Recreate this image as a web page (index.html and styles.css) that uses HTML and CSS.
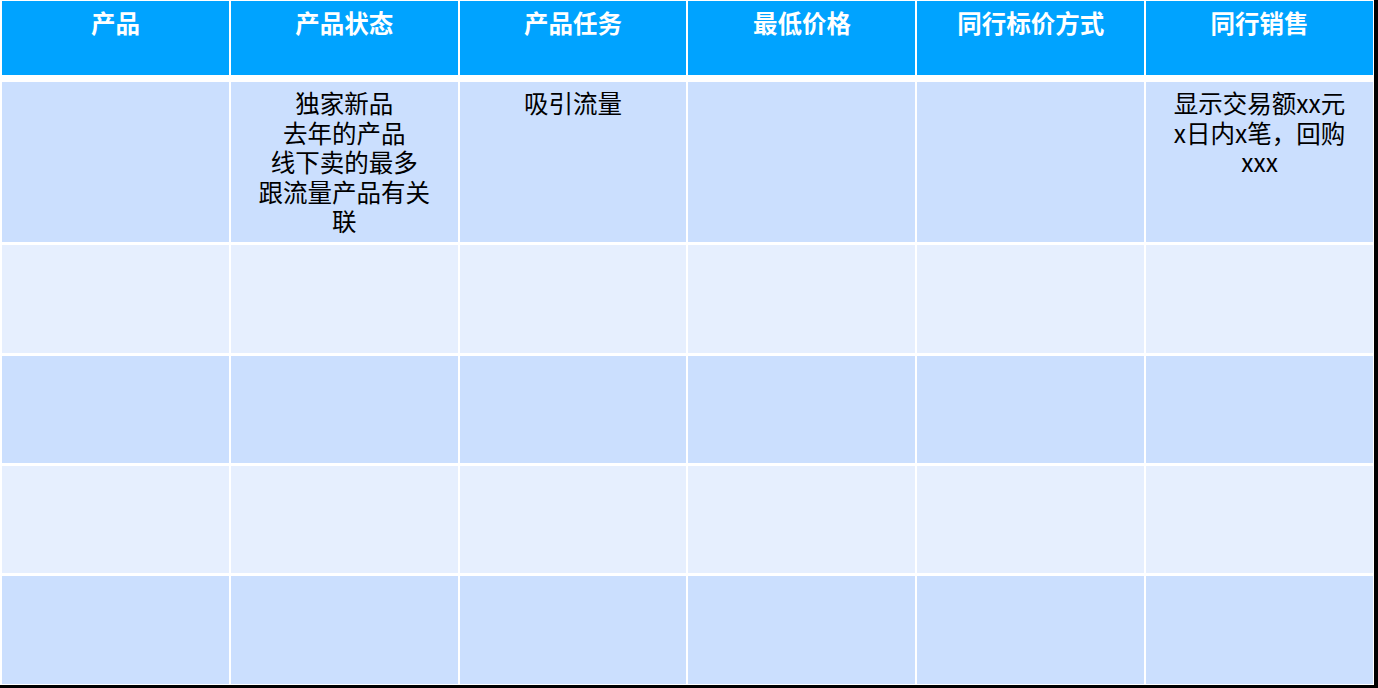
FILE: index.html
```html
<!DOCTYPE html>
<html lang="zh-CN">
<head>
<meta charset="utf-8">
<title>产品表</title>
<link rel="stylesheet" href="styles.css">
</head>
<body>
<div class="sheet">
  <div class="head-row">
    <div class="hcell">产品</div>
    <div class="hcell">产品状态</div>
    <div class="hcell">产品任务</div>
    <div class="hcell">最低价格</div>
    <div class="hcell">同行标价方式</div>
    <div class="hcell">同行销售</div>
  </div>
  <div class="body">
    <div class="row row-tall dark">
      <div class="cell"></div>
      <div class="cell">
        <div class="line">独家新品</div>
        <div class="line">去年的产品</div>
        <div class="line">线下卖的最多</div>
        <div class="line">跟流量产品有关</div>
        <div class="line">联</div>
      </div>
      <div class="cell"><div class="line">吸引流量</div></div>
      <div class="cell"></div>
      <div class="cell"></div>
      <div class="cell">
        <div class="line">显示交易额xx元</div>
        <div class="line">x日内x笔，回购</div>
        <div class="line">xxx</div>
      </div>
    </div>
    <div class="row r108 light">
      <div class="cell"></div><div class="cell"></div><div class="cell"></div><div class="cell"></div><div class="cell"></div><div class="cell"></div>
    </div>
    <div class="row r107 dark">
      <div class="cell"></div><div class="cell"></div><div class="cell"></div><div class="cell"></div><div class="cell"></div><div class="cell"></div>
    </div>
    <div class="row r107 light">
      <div class="cell"></div><div class="cell"></div><div class="cell"></div><div class="cell"></div><div class="cell"></div><div class="cell"></div>
    </div>
    <div class="row r108 dark">
      <div class="cell"></div><div class="cell"></div><div class="cell"></div><div class="cell"></div><div class="cell"></div><div class="cell"></div>
    </div>
  </div>
</div>
</body>
</html>
```
FILE: styles.css
```css
html, body {
  margin: 0;
  padding: 0;
  background: #000;
  width: 1378px;
  height: 688px;
  overflow: hidden;
}
.sheet {
  box-sizing: border-box;
  width: 1374px;
  height: 685px;
  background: #fff;
  padding: 1px 1px 1px 2px;
  display: flex;
  flex-direction: column;
  font-family: "Noto Sans CJK SC", "Noto Sans", sans-serif;
}
.head-row, .row {
  display: grid;
  grid-template-columns: repeat(6, 1fr);
  column-gap: 2px;
}
.head-row {
  height: 74px;
  margin-bottom: 7px;
}
.hcell {
  background: #00a3ff;
  color: #fff;
  font-weight: 700;
  font-size: 24.5px;
  line-height: 29px;
  text-align: center;
  padding-top: 7px;
}
.body {
  display: flex;
  flex-direction: column;
  row-gap: 3px;
}
.row-tall { height: 160px; }
.r108 { height: 108px; }
.r107 { height: 107px; }
.cell {
  font-size: 24.5px;
  color: #000;
  text-align: center;
  padding-top: 6px;
}
.line {
  height: 29.5px;
  line-height: 29.5px;
  white-space: nowrap;
}
.dark .cell { background: #cbdffe; }
.light .cell { background: #e6effe; }
```
